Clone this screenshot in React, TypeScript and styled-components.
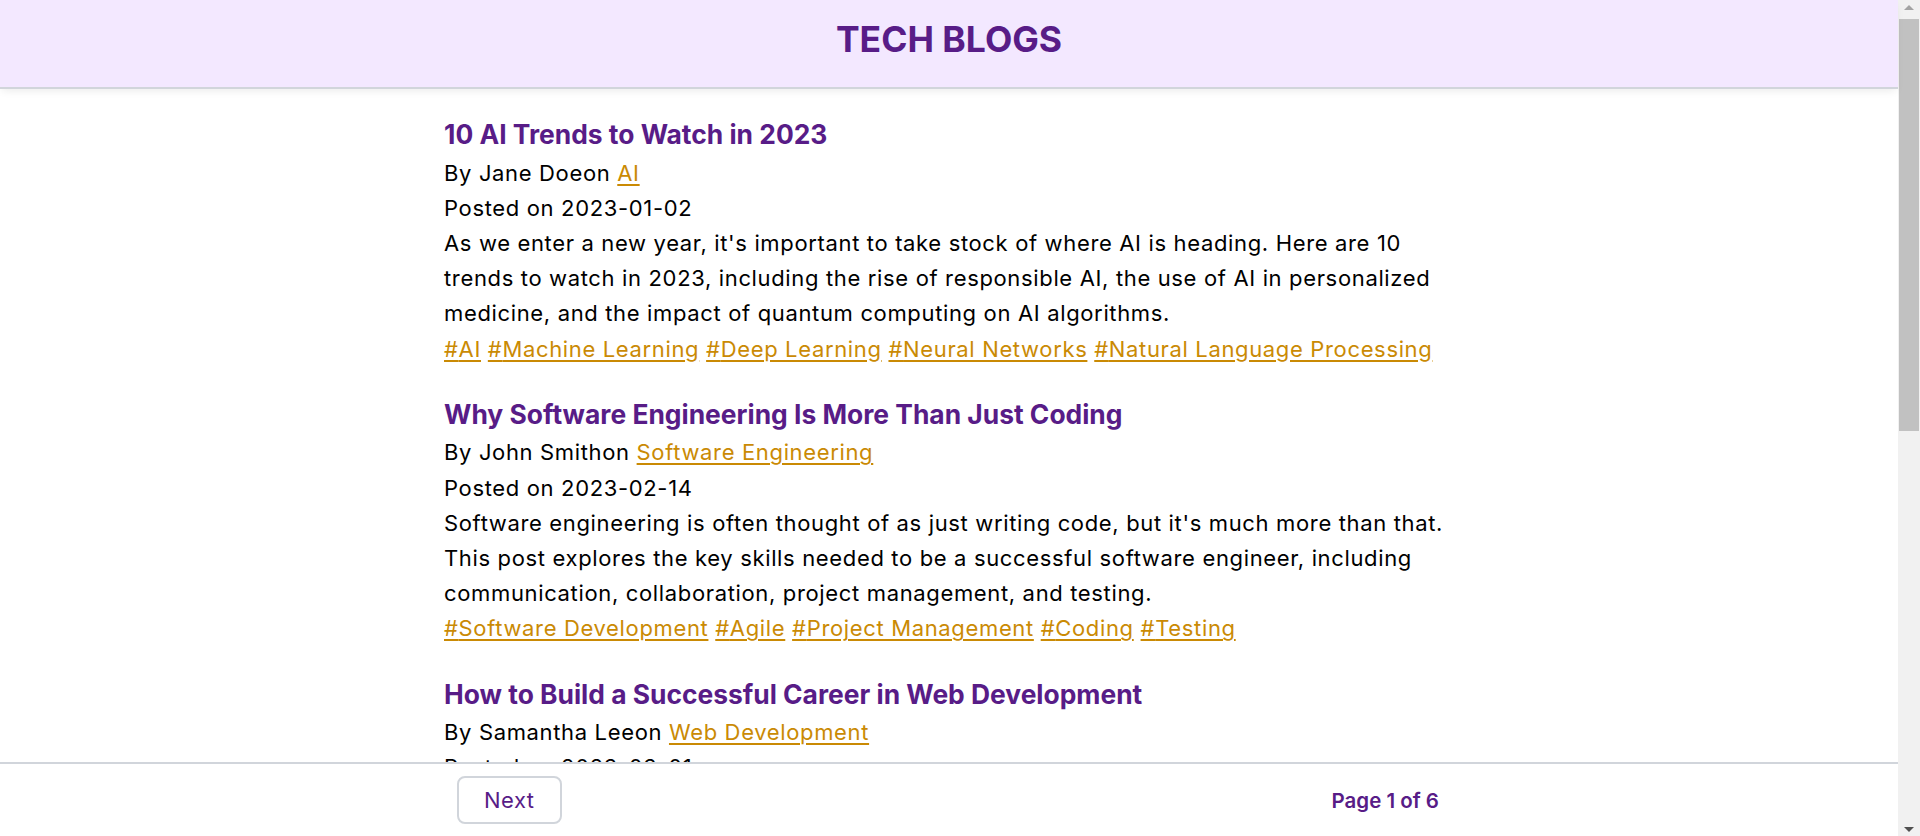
import React from 'react';
import styled, {createGlobalStyle} from 'styled-components';

const GlobalStyle = createGlobalStyle`
  * {
    box-sizing: border-box;
  }

  html, body, #root {
    height: 100%;
  }

  body {
    margin: 0;
    overflow: hidden;
    background: #fff;
    color: #000;
    font-family: Inter, "Noto Sans", "Liberation Sans", sans-serif;
  }
`;

const Page = styled.div`
  display: flex;
  height: 100vh;
`;

const Column = styled.div`
  flex: 1;
  min-width: 0;
  display: flex;
  flex-direction: column;
`;

const Header = styled.header`
  position: relative;
  z-index: 2;
  flex: none;
  height: 89px;
  padding-bottom: 7px;
  display: flex;
  align-items: center;
  justify-content: center;
  background: #f3e8ff;
  border-bottom: 2px solid #d1d5db;
  box-shadow: 0 4px 8px -2px rgba(0, 0, 0, .08);

  > h1 {
    margin: 0;
    font-size: 35.5px;
    font-weight: 700;
    color: #581c87;
    line-height: 40px;
  }
`;

const Scroller = styled.div`
  flex: 1;
  min-height: 0;
  overflow: hidden;
`;

const Main = styled.main`
  width: 1010px;
  margin: 0 auto;
  padding: 25px 0 40px;
`;

const Post = styled.article`
  margin-bottom: 27px;
`;

const Title = styled.h2`
  margin: 0;
  font-size: 26.4px;
  font-weight: 700;
  line-height: 41.6px;
  color: #581c87;
`;

const Line = styled.p`
  margin: 0;
  font-size: 22px;
  line-height: 35.2px;
  letter-spacing: 0.65px;
`;

const Link = styled.a`
  color: #ca8a04;
  text-decoration: underline;
  text-underline-offset: 3px;
`;

const Footer = styled.footer`
  flex: none;
  background: #fff;
  border-top: 2px solid #d1d5db;
`;

const FooterInner = styled.div`
  width: 1010px;
  margin: 0 auto;
  height: 72px;
  padding: 0 15px 0 13px;
  display: flex;
  align-items: center;
  justify-content: space-between;
`;

const Button = styled.button`
  height: 48px;
  padding: 0 25px;
  background: #fff;
  border: 2px solid #d1d5db;
  border-radius: 8px;
  color: #581c87;
  font-family: inherit;
  font-size: 22px;
  letter-spacing: 0.5px;
  cursor: pointer;
`;

const PageInfo = styled.span`
  font-size: 20.5px;
  font-weight: 600;
  color: #581c87;
`;

const ScrollBar = styled.div`
  flex: none;
  width: 22px;
  display: flex;
  flex-direction: column;
  background: #f1f1f1;
`;

const ArrowButton = styled.div<{$down?: boolean}>`
  flex: none;
  height: 17px;
  display: flex;
  align-items: center;
  justify-content: center;

  &::before {
    content: '';
    width: 0;
    height: 0;
    border-left: 5px solid transparent;
    border-right: 5px solid transparent;
    ${p => p.$down
      ? 'border-top: 5px solid #505050; margin-top: 4px;'
      : 'border-bottom: 5px solid #a3a3a3; margin-top: -3px;'}
  }
`;

const Track = styled.div`
  flex: 1;
  padding: 2px 1px 0;
`;

const Thumb = styled.div`
  height: 412px;
  background: #c1c1c1;
`;

type post = {
  title: string
  author: string
  category: string
  date: string
  content: string
  tags: string[]
}

const posts: post[] = [
  {
    title: '10 AI Trends to Watch in 2023',
    author: 'Jane Doe',
    category: 'AI',
    date: '2023-01-02',
    content: "As we enter a new year, it's important to take stock of where AI is heading. Here are 10 trends to watch in 2023, including the rise of responsible AI, the use of AI in personalized medicine, and the impact of quantum computing on AI algorithms.",
    tags: ['AI', 'Machine Learning', 'Deep Learning', 'Neural Networks', 'Natural Language Processing'],
  },
  {
    title: 'Why Software Engineering Is More Than Just Coding',
    author: 'John Smith',
    category: 'Software Engineering',
    date: '2023-02-14',
    content: "Software engineering is often thought of as just writing code, but it's much more than that. This post explores the key skills needed to be a successful software engineer, including communication, collaboration, project management, and testing.",
    tags: ['Software Development', 'Agile', 'Project Management', 'Coding', 'Testing'],
  },
  {
    title: 'How to Build a Successful Career in Web Development',
    author: 'Samantha Lee',
    category: 'Web Development',
    date: '2023-03-01',
    content: 'Web development is a fast-moving field with plenty of opportunities. In this post, we share tips on building a strong portfolio, learning the right frameworks, networking with other developers, and staying up to date with new technologies.',
    tags: ['Web Development', 'Career', 'JavaScript', 'React', 'Portfolio'],
  },
  {
    title: 'The Future of Cloud Computing',
    author: 'Michael Chen',
    category: 'Cloud Computing',
    date: '2023-03-15',
    content: 'Cloud computing has changed the way companies build and ship software. This post looks at serverless architectures, multi-cloud strategies, edge computing, and what they all mean for developers and businesses in the years ahead.',
    tags: ['Cloud', 'Serverless', 'DevOps', 'Edge Computing', 'Kubernetes'],
  },
];

const App = () => {
  return (
    <>
      <GlobalStyle/>
      <Page>
        <Column>
          <Header>
            <h1>TECH BLOGS</h1>
          </Header>
          <Scroller>
            <Main>
              {posts.map(p => (
                <Post key={p.title}>
                  <Title>{p.title}</Title>
                  <Line>By {p.author}on <Link href="#">{p.category}</Link></Line>
                  <Line>Posted on {p.date}</Line>
                  <Line>{p.content}</Line>
                  <Line>
                    {p.tags.map((t, i) => (
                      <React.Fragment key={t}>
                        {i > 0 && ' '}
                        <Link href="#">#{t}</Link>
                      </React.Fragment>
                    ))}
                  </Line>
                </Post>
              ))}
            </Main>
          </Scroller>
          <Footer>
            <FooterInner>
              <Button>Next</Button>
              <PageInfo>Page 1 of 6</PageInfo>
            </FooterInner>
          </Footer>
        </Column>
        <ScrollBar>
          <ArrowButton/>
          <Track>
            <Thumb/>
          </Track>
          <ArrowButton $down/>
        </ScrollBar>
      </Page>
    </>
  );
};

export default App;
